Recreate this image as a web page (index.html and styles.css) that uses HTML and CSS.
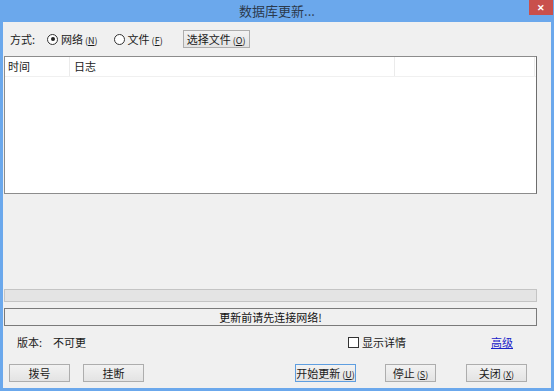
FILE: index.html
```html
<!DOCTYPE html>
<html>

<head>
    <title>数据库更新...</title>
    <link rel="stylesheet" href="styles.css">
</head>

<body>
    <div class="win">
        <div class="win-title">
            <span></span>
            <span class="win-caption">数据库更新...</span>
            <span class="win-close">&#x2715;</span>
        </div>
        <div class="win-client">
            <div class="mode-row">
                <span class="mode-label">方式:</span>
                <label class="radio">
                    <span class="radio-dot checked"></span>
                    <span>网络<small>(<u>N</u>)</small></span>
                </label>
                <label class="radio">
                    <span class="radio-dot"></span>
                    <span>文件<small>(<u>F</u>)</small></span>
                </label>
                <button class="btn btn-file">选择文件<small>(<u>O</u>)</small></button>
            </div>

            <div class="log-list">
                <div class="log-head">
                    <span class="col-time">时间</span>
                    <span class="col-log">日志</span>
                    <span class="col-rest"></span>
                </div>
            </div>

            <div class="progress"></div>
            <div class="status">更新前请先连接网络!</div>

            <div class="info-row">
                <span class="ver-label">版本:</span>
                <span class="ver-value">不可更新</span>
                <label class="check">
                    <span class="check-box"></span>
                    <span>显示详情</span>
                </label>
                <a class="adv-link" href="#">高级</a>
            </div>

            <div class="btn-row">
                <button class="btn btn-dial">拨号</button>
                <button class="btn btn-hang">挂断</button>
                <button class="btn btn-start">开始更新<small>(<u>U</u>)</small></button>
                <button class="btn btn-stop">停止<small>(<u>S</u>)</small></button>
                <button class="btn btn-close">关闭<small>(<u>X</u>)</small></button>
            </div>
        </div>
    </div>
</body>

</html>
```

FILE: styles.css
```css
html, body{
    margin: 0;
    padding: 0;
}
body{
    width: 554px;
    height: 391px;
    background-color: #6ba8ec;
    font-family: "Noto Sans CJK SC", "Liberation Sans", sans-serif;
    font-size: 11px;
    color: #1a1a1a;
    overflow: hidden;
}
.win{
    display: flex;
    flex-direction: column;
    height: 391px;
}
.win-title{
    height: 22px;
    display: grid;
    grid-template-columns: 1fr auto 1fr;
    align-items: start;
}
.win-caption{
    line-height: 22px;
    font-size: 13px;
    color: #2b3a4d;
}
.win-close{
    justify-self: end;
    width: 24px;
    height: 15px;
    margin-right: 1px;
    background-color: #c9504c;
    color: #fff;
    font-size: 9px;
    line-height: 15px;
    text-align: center;
    font-weight: bold;
}
.win-client{
    flex: 1;
    margin: 0 3px 3px 3px;
    background-color: #f0f0f0;
    display: flex;
    flex-direction: column;
}
small{
    font-size: 9px;
    margin-left: 2px;
}

/* 方式 */
.mode-row{
    display: flex;
    align-items: center;
    height: 18px;
    margin-top: 8px;
    padding-left: 7px;
}
.mode-label{
    width: 37px;
}
.radio{
    display: flex;
    align-items: center;
    gap: 3px;
}
.radio + .radio{
    margin-left: 16px;
}
.radio-dot{
    width: 9px;
    height: 9px;
    border: 1px solid #333;
    border-radius: 50%;
    box-sizing: content-box;
    background: #fff;
}
.radio-dot.checked::after{
    content: "";
    display: block;
    width: 4px;
    height: 4px;
    margin: 2.5px;
    border-radius: 50%;
    background: #222;
}
.btn{
    font-family: inherit;
    font-size: 11px;
    color: #1a1a1a;
    height: 18px;
    padding: 0;
    border: 1px solid #adadad;
    background: linear-gradient(#f2f2f2, #e3e3e3);
    line-height: 16px;
    box-sizing: border-box;
    white-space: nowrap;
}
.btn-file{
    width: 67px;
    margin-left: 20px;
}

/* 日志列表 */
.log-list{
    margin: 8px 0 0 1px;
    width: 533px;
    height: 138px;
    box-sizing: border-box;
    border: 1px solid #8c8c8c;
    border-right-color: #6d6d6d;
    background: #fff;
}
.log-head{
    display: flex;
    height: 19px;
    line-height: 19px;
    border-bottom: 1px solid #f0f0f0;
}
.log-head span{
    border-right: 1px solid #ebebeb;
    box-sizing: border-box;
}
.col-time{
    width: 65px;
    padding-left: 3px;
}
.col-log{
    width: 325px;
    padding-left: 4px;
}
.col-rest{
    width: 140px;
}

/* 进度与状态 */
.progress{
    margin: 95px 0 0 1px;
    width: 533px;
    height: 13px;
    box-sizing: border-box;
    border: 1px solid #c4c4c4;
    background: #e4e4e4;
}
.status{
    margin: 6px 0 0 1px;
    width: 533px;
    height: 18px;
    box-sizing: border-box;
    border: 1px solid #7a7a7a;
    text-align: center;
    line-height: 16px;
    color: #111;
}

/* 版本行 */
.info-row{
    display: flex;
    align-items: center;
    height: 16px;
    margin-top: 8px;
    padding-left: 14px;
}
.ver-label{
    width: 36px;
}
.ver-value{
    width: 33px;
    overflow: hidden;
    white-space: nowrap;
}
.check{
    display: flex;
    align-items: center;
    gap: 3px;
    margin-left: 262px;
}
.check-box{
    width: 9px;
    height: 9px;
    border: 1px solid #333;
    background: #fff;
}
.adv-link{
    margin-left: 85px;
    color: #1a22c8;
    text-decoration: underline;
}

/* 底部按钮 */
.btn-row{
    display: flex;
    margin-top: 14px;
    padding-left: 6px;
}
.btn-dial, .btn-hang{
    width: 61px;
}
.btn-hang{
    margin-left: 13px;
}
.btn-start{
    width: 61px;
    margin-left: 151px;
    border-color: #5e9ee0;
}
.btn-stop{
    width: 51px;
    margin-left: 29px;
}
.btn-close{
    width: 61px;
    margin-left: 30px;
}
```
